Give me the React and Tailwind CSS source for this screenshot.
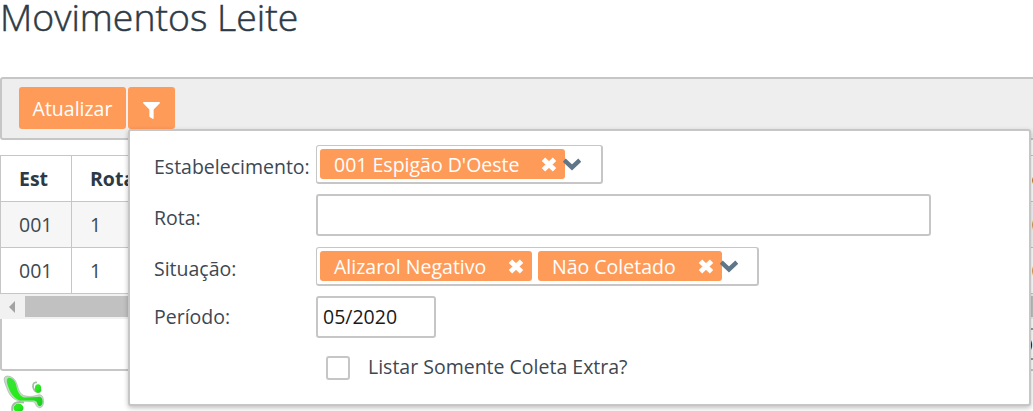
import React from "react";
import { FaFilter } from "react-icons/fa";

const rows = [
  { est: "001", rota: "1", last: "0", shade: "bg-[#f6f6f6]" },
  { est: "001", rota: "1", last: "0", shade: "bg-white" },
];

function CloseIcon() {
  return (
    <svg className="h-[15px] w-[16px] shrink-0" viewBox="0 0 15 14">
      <path d="M2.3 2L12.7 12M12.7 2L2.3 12" stroke="#fff" strokeWidth="4.6" />
    </svg>
  );
}

function Chevron() {
  return (
    <svg className="-ml-[2px] mt-[8px] h-[14px] w-[18px] shrink-0" viewBox="0 0 18 14">
      <path d="M1.2 3.2L9 10.4L16.8 3.2" fill="none" stroke="#5f7688" strokeWidth="4.4" />
    </svg>
  );
}

function Tag({ children, width }) {
  return (
    <span className={`flex h-[30px] shrink-0 items-center justify-between rounded-[3px] bg-[#ff9b59] pr-[8px] pl-[14px] text-white ${width}`}>
      <span className="pt-[2px] text-[19.5px] leading-[30px] whitespace-nowrap">{children}</span>
      <CloseIcon />
    </span>
  );
}

function MultiSelect({ width, children }) {
  return (
    <div className={`flex h-[39px] items-start rounded-[3px] border border-r-2 border-b-2 border-[#c6c6c6] pt-[3px] pl-[3px] ${width}`}>
      {children}
      <Chevron />
    </div>
  );
}

function Label({ children }) {
  return <span className="block w-[162px] shrink-0 whitespace-nowrap text-[19.5px] leading-[26px]">{children}</span>;
}

function FilterPanel() {
  return (
    <div className="absolute top-[129px] left-[128px] h-[277px] w-[903px] rounded-[3px] border-2 border-[#c6c6c6] bg-white pt-[14px] pl-[24px] font-normal text-[#3d4852] shadow-[0_2px_5px_rgba(0,0,0,0.25)]">
      <div className="flex h-[49px] items-start">
        <div className="pt-[9px]"><Label>Estabelecimento:</Label></div>
        <MultiSelect width="w-[287px]">
          <Tag width="w-[245px]">001 Espigão D'Oeste</Tag>
        </MultiSelect>
      </div>
      <div className="flex h-[53px] items-start">
        <div className="pt-[11px]"><Label>Rota:</Label></div>
        <div className="h-[42px] w-[615px] rounded-[3px] border-2 border-[#c6c6c6]" />
      </div>
      <div className="flex h-[49px] items-start">
        <div className="pt-[9px]"><Label>Situação:</Label></div>
        <MultiSelect width="w-[443px]">
          <Tag width="w-[212px]">Alizarol Negativo</Tag>
          <span className="w-[6px]" />
          <Tag width="w-[184px]">Não Coletado</Tag>
        </MultiSelect>
      </div>
      <div className="flex h-[60px] items-start">
        <div className="pt-[8px]"><Label>Período:</Label></div>
        <div className="h-[42px] w-[120px] rounded-[3px] border-2 border-[#c6c6c6] pl-[5px] text-[19.5px] leading-[38px] text-[#1a1a1a]">05/2020</div>
      </div>
      <div className="flex items-center pl-[172px]">
        <span className="h-6 w-6 rounded-[3px] border-2 border-[#c6c6c6]" />
        <span className="-mt-[3px] pl-[18px] text-[19.5px] leading-6">Listar Somente Coleta Extra?</span>
      </div>
    </div>
  );
}

function Logo() {
  return (
    <svg className="mt-[2px] block h-[38px] w-[50px]" viewBox="0 0 50 38">
      <defs>
        <linearGradient id="leaf" x1="0" y1="0" x2="1" y2="1">
          <stop offset="0" stopColor="#3be03b" />
          <stop offset="0.5" stopColor="#24ed16" />
          <stop offset="1" stopColor="#1ccb22" />
        </linearGradient>
      </defs>
      <path d="M4.500 4.500C6 2 11 3 14 6C18 10 17 17 22 21.500C25 24 33 24 38 22C42 21 43.500 24 43.500 29C43.500 34 40 36 37.500 34C35 32 36 29 32 28.500L20 28C13 27 9 22 6.500 14C5 10 3.500 7 4.500 4.500Z" fill="#c3dcc3" stroke="#a3b8a3" strokeWidth="0.7" />
      <path d="M8 5C12 4 15.500 8 16.500 13.500C17.500 19 20 23 24 24.500L38 24C42 23 43 27 42.500 30C41.500 34 38.500 34 37.500 31C37 28 35 27.500 31 27.500H20C14.500 26 10 20 8 13C7 10 6 7 8 5Z" fill="url(#leaf)" />
      <path d="M37 9.500C33 8.500 32 13 34 16.500C35.500 19.500 40 20.500 41 16.500" fill="none" stroke="#a3bda3" strokeWidth="1.8" />
      <ellipse cx="38" cy="15.500" rx="3.100" ry="4.200" fill="url(#leaf)" />
      <path d="M24 29.500C16 27.500 11 31 12.500 38" fill="none" stroke="#a3bda3" strokeWidth="2" />
      <ellipse cx="18.500" cy="35" rx="5" ry="4.400" fill="url(#leaf)" />
    </svg>
  );
}

export default function App() {
  return (
    <div className="relative h-[411px] w-[1033px] overflow-hidden bg-white font-['Open_Sans',sans-serif] text-[#2d3a45]">
      <h1 className="h-[77px] text-[37.4px] leading-[34px] font-light [-webkit-text-stroke:0.5px_#2d3a45]">Movimentos Leite</h1>
      <div className="flex h-[63px] w-[1060px] gap-[2px] rounded-[3px] border-2 border-[#c6c6c6] bg-[#eee] pt-[8px] pl-[17px]">
        <button className="h-[42px] w-[107px] rounded-[3px] bg-[#ff9b59] pt-[2px] text-[19.5px] text-white">Atualizar</button>
        <button className="flex h-[42px] w-[47px] items-center justify-center rounded-[3px] bg-[#ff9b59] pt-[5px] text-white">
          <FaFilter size={17} />
        </button>
      </div>
      <div className="mt-[15px] w-[1060px] border-t border-l border-[#c6c6c6] text-[19.5px]">
        <div className="flex h-[46px] items-center border-b border-[#c6c6c6] font-bold">
          <div className="flex h-full w-[71px] items-center border-r border-[#c6c6c6] pl-[18px]">Est</div>
          <div className="flex-1 pl-[18px]">Rota</div>
          <div className="w-[28.5px]">o</div>
        </div>
        {rows.map((row, i) => (
          <div key={i} className={`flex h-[46px] items-center border-b border-[#c6c6c6] font-normal text-[#3d4852] ${row.shade}`}>
            <div className="flex h-full w-[71px] items-center border-r border-[#c6c6c6] pl-[18px]">{row.est}</div>
            <div className="flex-1 pl-[18px]">{row.rota}</div>
            <div className="w-[28.5px]">{row.last}</div>
          </div>
        ))}
      </div>
      <div className="flex h-[25px] w-[1060px] items-center bg-[#f1f1f1]">
        <svg className="ml-[9px] h-3 w-[7px]" viewBox="0 0 7 12"><path d="M0 6L6 0V12Z" fill="#a3a3a3" /></svg>
        <div className="ml-[9px] h-[21px] flex-1 bg-[#c1c1c1]" />
      </div>
      <div className="flex h-[52px] w-[1060px] justify-end rounded-b-[3px] border-2 border-t-0 border-[#c6c6c6] pt-[9px] pr-[10px]">
        <div className="h-[32px] w-[70px] border-2 border-[#999] pl-[43px] text-[17px] leading-[30px] text-black">0</div>
      </div>
      <Logo />
      <FilterPanel />
    </div>
  );
}
